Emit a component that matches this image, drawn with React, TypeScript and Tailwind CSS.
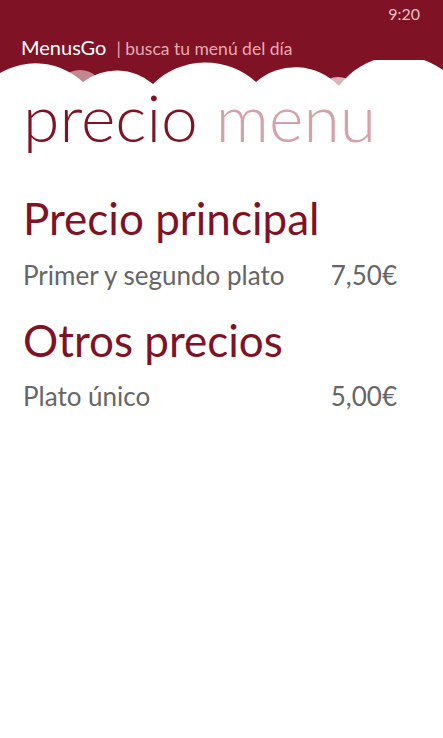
import React from 'react';

const font = { fontFamily: 'Lato, "Open Sans", sans-serif' };

function Clouds() {
  return (
    <svg width="443" height="30" viewBox="0 0 443 30" className="block">
      <rect x="0" y="0" width="443" height="30" fill="#801225" />
      <circle cx="80" cy="34" r="24" fill="#c48790" />
      <circle cx="338" cy="40" r="23" fill="#dcb3b9" />
      <path
        d="M0 13 A70 70 0 0 1 83 22 A55 55 0 0 1 153 24 A75 75 0 0 1 256 22 A60 60 0 0 1 339 26 A75 75 0 0 1 443 10 L443 30 L0 30 Z"
        fill="#ffffff"
      />
    </svg>
  );
}

function PriceRow({ label, price }: { label: string; price: string }) {
  return (
    <div className="flex justify-between pr-[23px] text-[26px] text-[#666666] leading-none">
      <span>{label}</span>
      <span>{price}</span>
    </div>
  );
}

export default function App() {
  return (
    <div className="w-[443px] h-[738px] bg-white overflow-hidden" style={font}>
      <div className="bg-[#801225]">
        <div className="flex justify-end pr-[23px] pt-[6px] h-[26px] text-[16px] leading-none text-[#e2c3c8]">
          9:20
        </div>
        <div className="flex items-baseline px-[21px] h-[34px] pt-[6px]">
          <span className="text-[20px] text-white">MenusGo</span>
          <span className="ml-[10px] text-[17.5px] text-[#e8a8b2]">| busca tu menú del día</span>
        </div>
      </div>
      <Clouds />
      <div className="px-[23px]">
        <h1 className="text-[66px] leading-none font-light -mt-[6px]">
          <span className="text-[#801225]">precio</span>{' '}
          <span className="text-[#d4a1a8]">menu</span>
        </h1>
        <h2 className="mt-[46px] text-[44px] leading-none text-[#801225]">Precio principal</h2>
        <div className="mt-[22px]">
          <PriceRow label="Primer y segundo plato" price="7,50€" />
        </div>
        <h2 className="mt-[30px] text-[44px] leading-none text-[#801225]">Otros precios</h2>
        <div className="mt-[21px]">
          <PriceRow label="Plato único" price="5,00€" />
        </div>
      </div>
    </div>
  );
}
